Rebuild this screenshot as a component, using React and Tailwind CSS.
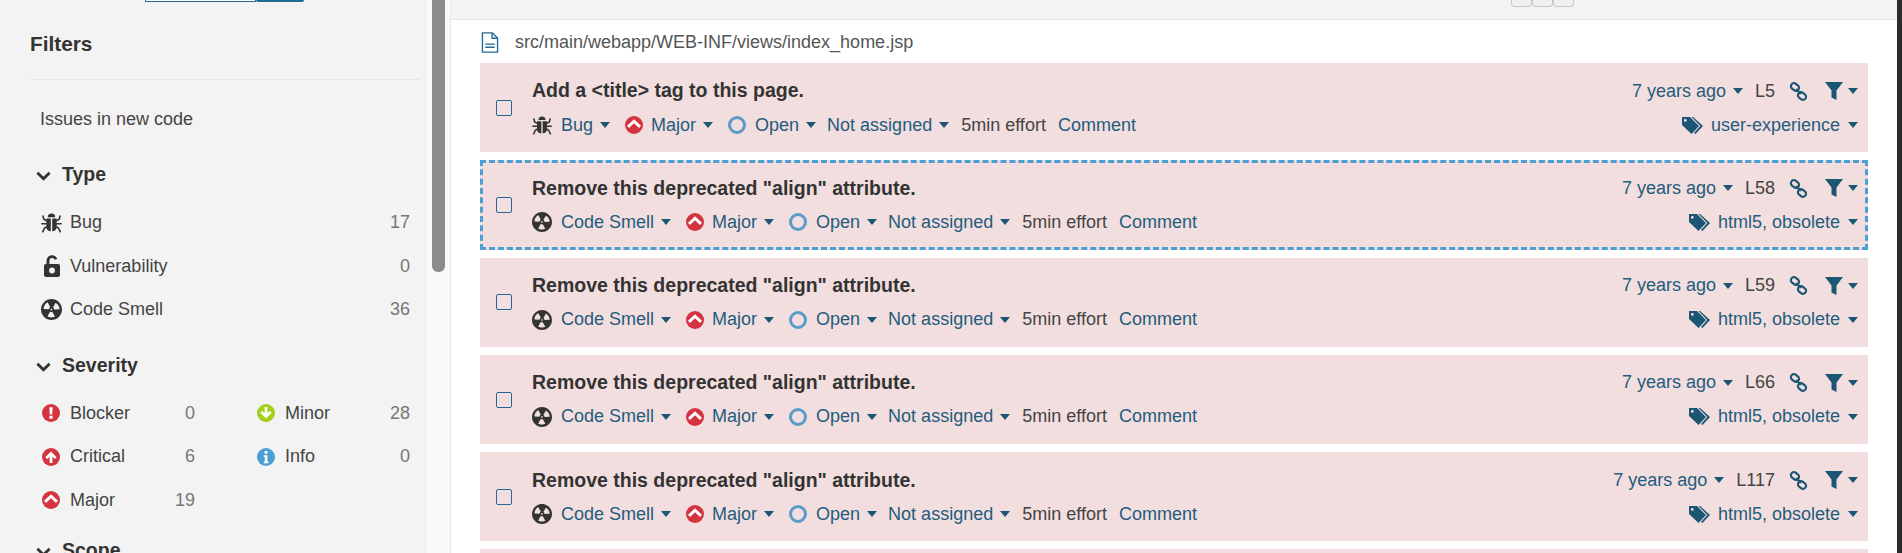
import React from "react";

const ISSUES = [
  { title: "Add a <title> tag to this page.", type: "Bug", line: "L5", tags: "user-experience" },
  { title: 'Remove this deprecated "align" attribute.', type: "Code Smell", line: "L58", tags: "html5, obsolete", focused: true },
  { title: 'Remove this deprecated "align" attribute.', type: "Code Smell", line: "L59", tags: "html5, obsolete" },
  { title: 'Remove this deprecated "align" attribute.', type: "Code Smell", line: "L66", tags: "html5, obsolete" },
  { title: 'Remove this deprecated "align" attribute.', type: "Code Smell", line: "L117", tags: "html5, obsolete" },
];

const BugIcon = ({ className }) => (
  <svg viewBox="0 0 21 21" className={className} fill="currentColor">
    <path d="M6.800 5.200a3.700 3.700 0 0 1 7.400 0z" />
    <path d="M5.300 6.500h4.500v12.800c-2.700 0-4.500-1.700-4.500-4.300zM15.700 6.500h-4.500v12.800c2.700 0 4.500-1.700 4.500-4.300z" />
    <path fill="none" stroke="currentColor" strokeWidth="1.600" d="M1.800 3.500l1 3.800 2.800 1.500M19.200 3.500l-1 3.800-2.800 1.500M.3 11.800h5.300M20.700 11.800h-5.300M1.500 20.300l2-4.300 2.300-1.300M19.500 20.300l-2-4.300-2.300-1.300" />
  </svg>
);

const LockIcon = ({ className }) => (
  <svg viewBox="0 0 16 22" className={className} fill="currentColor">
    <path fillRule="evenodd" d="M2.500 9V6C2.500 2.500 5 .2 8 .2c2.600 0 4.600 1.500 5.300 3.800l-2.800.8C10.100 3.500 9.200 2.900 8 2.900 6.500 2.900 5.400 4.100 5.400 6v3H14c1.100 0 2 .9 2 2v9c0 1.100-.9 2-2 2H2c-1.100 0-2-.9-2-2v-9c0-1.100.9-2 2-2h.5zM8 12.600a2.900 2.900 0 1 0 0 5.800 2.900 2.900 0 0 0 0-5.800z" />
  </svg>
);

const SmellIcon = ({ className }) => (
  <svg viewBox="2 2 12 12" className={className} fill="currentColor">
    <path fillRule="evenodd" d="M8 2C4.700 2 2 4.700 2 8s2.700 6 6 6 6-2.700 6-6-2.700-6-6-6zm-.5 5.500h.9v.9h-.9v-.9zm-3.800.2c-.1 0-.2-.1-.2-.2 0-.4.1-1.200.6-2S5.300 4.200 5.600 4c.2 0 .3 0 .3.1l1.300 2.300c0 .1 0 .2-.1.2-.1.2-.2.3-.3.5-.1.2-.2.4-.2.5 0 .1-.1.2-.2.2l-2.700-.1zM9.900 12c-.3.2-1.100.5-2 .5-.9 0-1.700-.3-2-.5-.1 0-.1-.2-.1-.3l1.300-2.300c0-.1.1-.1.2-.1.2.1.3.1.5.1s.4 0 .5-.1c.1 0 .2 0 .2.1l1.300 2.300c.2.2.2.3.1.3zm2.500-4.100L9.700 8c-.1 0-.2-.1-.2-.2 0-.2-.1-.4-.2-.5 0-.1-.2-.3-.3-.4-.1 0-.1-.1-.1-.2l1.300-2.300c.1-.1.2-.1.3-.1.3.2 1 .7 1.500 1.500s.6 1.600.6 2c0 0-.1.1-.2.1z" />
  </svg>
);

const SevIcon = ({ kind, className }) => {
  const fill = kind === "minor" ? "#a4d01a" : kind === "info" ? "#4b9fd5" : "#d4333f";
  return (
    <svg viewBox="0 0 18 18" className={className}>
      <circle cx="9" cy="9" r="9" fill={fill} />
      {kind === "blocker" && (
        <path fill="#fff" d="M7.300 3.200h3.400l-.5 7.300H7.800zM7.400 11.800h3.200v3H7.400z" />
      )}
      {kind === "critical" && (
        <path fill="#fff" d="M9 3.500l5.700 5.700-1.900 1.800-2.400-2.300V15H7.600V8.700L5.200 11 3.300 9.200z" />
      )}
      {kind === "major" && (
        <path fill="#fff" d="M9 3.300l7 6.500-2 2.100-5-4.600-5 4.600-2-2.100z" />
      )}
      {kind === "minor" && (
        <path fill="#fff" d="M9 14.500L3.300 8.800 5.200 7l2.400 2.300V3h2.800v6.300L12.800 7l1.900 1.800z" />
      )}
      {kind === "info" && (
        <path fill="#fff" d="M7.600 3h2.800v2.800H7.600zM6.800 7.300h3.600v6.200h1v1.700H6.800v-1.700h1V9H6.800z" />
      )}
    </svg>
  );
};

const Caret = () => (
  <svg viewBox="0 0 10 6" className="w-[10px] h-[6px] shrink-0 text-[#1b5674]" fill="currentColor">
    <path d="M0 0h10L5 6z" />
  </svg>
);

const Chevron = () => (
  <svg viewBox="0 0 16 10" className="w-[15px] h-[10px] text-[#333]" fill="none" stroke="currentColor" strokeWidth="3">
    <path d="M1.500 1.500L8 8l6.500-6.500" />
  </svg>
);

const FacetRow = ({ icon, label, count }) => (
  <div className="flex items-center h-[43.5px] pl-[11px] pr-[10px]">
    <span className="w-[29px] flex justify-start items-center">{icon}</span>
    <span className="flex-1 text-[#444]">{label}</span>
    <span className="text-[#777]">{count}</span>
  </div>
);

const FacetTitle = ({ children, className }) => (
  <div className={`flex items-center pl-[6px] font-bold text-[19.5px] text-[#333] ${className}`}>
    <span className="w-[26px] flex mt-[4px]">
      <Chevron />
    </span>
    {children}
  </div>
);

const SevRow = ({ kind, label, count }) => (
  <div className="flex items-center h-[43.5px] pl-[12px]">
    <span className="w-[28px] flex items-center">
      <SevIcon kind={kind} className="w-[18px] h-[18px]" />
    </span>
    <span className="flex-1 text-[#444]">{label}</span>
    <span className="text-[#777]">{count}</span>
  </div>
);

const Sidebar = () => (
  <aside className="w-[427px] shrink-0 bg-[#f3f3f3] pl-[30px] pr-[7px] overflow-hidden">
    <div className="flex h-[3px]">
      <div className="ml-[115px] w-[111px] h-[2px] border-x border-b border-[#236a97] bg-white" />
      <div className="w-[48px] h-[2px] rounded-b bg-[#236a97]" />
    </div>
    <h2 className="font-bold text-[20.8px] text-[#333] leading-[22px] mt-[30px]">Filters</h2>
    <div className="h-px bg-[#e6e6e6] mt-[24px]" />
    <p className="pl-[10px] mt-[29px] leading-[20px] text-[#444]">Issues in new code</p>
    <FacetTitle className="mt-[33px] leading-[24px]">Type</FacetTitle>
    <div className="mt-[15px]">
      <FacetRow icon={<BugIcon className="w-[21px] h-[21px] text-[#333]" />} label="Bug" count="17" />
      <FacetRow icon={<span className="pl-[3px] flex"><LockIcon className="w-[16px] h-[22px] text-[#333]" /></span>} label="Vulnerability" count="0" />
      <FacetRow icon={<SmellIcon className="w-[21px] h-[21px] text-[#333]" />} label="Code Smell" count="36" />
    </div>
    <FacetTitle className="mt-[21px] leading-[24px]">Severity</FacetTitle>
    <div className="mt-[15px] grid grid-cols-2 gap-x-[60px]">
      <div>
        <SevRow kind="blocker" label="Blocker" count="0" />
        <SevRow kind="critical" label="Critical" count="6" />
        <SevRow kind="major" label="Major" count="19" />
      </div>
      <div className="-ml-[10px] mr-[10px]">
        <SevRow kind="minor" label="Minor" count="28" />
        <SevRow kind="info" label="Info" count="0" />
      </div>
    </div>
    <FacetTitle className="mt-[16px] leading-[24px]">Scope</FacetTitle>
  </aside>
);

const LinkIcon = () => (
  <svg viewBox="0 0 20 20" className="w-[19px] h-[19px] text-[#1b5674]" fill="none" stroke="currentColor" strokeWidth="2.300">
    <rect x="1.800" y="2" width="9" height="6.500" rx="3.200" transform="rotate(38 6.300 5.200)" />
    <rect x="9.200" y="11.500" width="9" height="6.500" rx="3.200" transform="rotate(38 13.700 14.700)" />
    <path d="M7.500 7.500l5 5" />
  </svg>
);

const FilterIcon = () => (
  <svg viewBox="0 0 18 18" className="w-[18px] h-[18px] text-[#1b5674]" fill="currentColor">
    <path d="M0 0h18l-6.500 8.500V18l-5-2.500V8.500z" />
  </svg>
);

const TagIcon = () => (
  <svg viewBox="0 0 21 17" className="w-[21px] h-[17px] text-[#1b5674]" fill="currentColor">
    <path fillRule="evenodd" d="M0 0h8l9 9-7.500 8L0 8zM3.300 2a1.400 1.400 0 1 0 0 2.800 1.400 1.400 0 0 0 0-2.800z" />
    <path d="M11 0l10 9-7.500 8-1.500-1 6.300-7-8.800-9z" />
  </svg>
);

const Link = ({ children }) => (
  <span className="inline-flex items-center gap-[7px] text-[#1f5c7d]">
    {children}
    <Caret />
  </span>
);

const IssueRow = ({ issue }) => (
  <div
    className={`relative flex h-[89.3px] shrink-0 bg-[#f2dede] ${
      issue.focused ? "border-[3px] border-dashed border-[#4b9fd5]" : ""
    }`}
  >
    <div className={`flex items-center ${issue.focused ? "pl-[13px] w-[49px]" : "pl-[16px] w-[52px]"}`}>
      <span className="block w-[16px] h-[16px] rounded-[2px] border border-[#236a97]" />
    </div>
    <div className={`flex-1 flex flex-col ${issue.focused ? "pr-[7px] pt-[13px]" : "pr-[10px] pt-[16px]"}`}>
      <div className="flex justify-between items-center h-[24px]">
        <span className="font-bold text-[19.5px] text-[#333]">{issue.title}</span>
        <div className="flex items-center">
          <Link>7 years ago</Link>
          <span className="ml-[12px] text-[#444]">{issue.line}</span>
          <span className="ml-[14px] flex"><LinkIcon /></span>
          <span className="ml-[17px] flex items-center gap-[5px]">
            <FilterIcon />
            <Caret />
          </span>
        </div>
      </div>
      <div className="flex justify-between items-center h-[24px] mt-[10px]">
        <div className="flex items-center">
          {issue.type === "Bug" ? (
            <BugIcon className="w-[20px] h-[20px] text-[#333]" />
          ) : (
            <SmellIcon className="w-[20px] h-[20px] text-[#333]" />
          )}
          <span className="ml-[9px]"><Link>{issue.type}</Link></span>
          <span className="ml-[15px]"><SevIcon kind="major" className="w-[18px] h-[18px]" /></span>
          <span className="ml-[8px]"><Link>Major</Link></span>
          <span className="ml-[15px] block w-[18px] h-[18px] rounded-full border-[3px] border-[#5b9bc9]" />
          <span className="ml-[9px]"><Link>Open</Link></span>
          <span className="ml-[11px]"><Link>Not assigned</Link></span>
          <span className="ml-[12px] text-[#444]">5min effort</span>
          <span className="ml-[12px] text-[#1f5c7d]">Comment</span>
        </div>
        <div className="flex items-center gap-[8px]">
          <TagIcon />
          <span className="inline-flex items-center gap-[8px] text-[#1f5c7d]">
            {issue.tags}
            <Caret />
          </span>
        </div>
      </div>
    </div>
  </div>
);

const FileIcon = () => (
  <svg viewBox="0 0 16 20" className="w-[18px] h-[21px] text-[#236a97]" fill="none" stroke="currentColor" strokeWidth="1.300">
    <path d="M.8.800h9.500l4.900 4.900v13.500H.800z" />
    <path d="M10 1v5h5M3.500 11.500h9M3.500 14.500h9" />
  </svg>
);

export default function App() {
  return (
    <div className="flex w-[1902px] h-[553px] overflow-hidden bg-white text-[18px] font-['Liberation_Sans',Arial,sans-serif]">
      <Sidebar />
      <div className="w-[23px] shrink-0 bg-[#fafafa] pl-[5px]">
        <div className="w-[13px] h-[272px] rounded-b-[6px] bg-[#8c8c8c]" />
      </div>
      <main className="flex-1 min-w-0 border-l border-[#e6e6e6] flex flex-col">
        <div className="h-[20px] shrink-0 bg-[#f3f3f3] border-b border-[#e6e6e6] flex pl-[1060px]">
          {[0, 1, 2].map((k) => (
            <span key={k} className="w-[21px] h-[7px] rounded-b-[4px] border border-t-0 border-[#c8c8c8] bg-[#f0f0f0]" />
          ))}
        </div>
        <div className="flex items-center h-[43px] shrink-0 pl-[30px] pt-[2px] text-[#555]">
          <FileIcon />
          <span className="ml-[16px]">src/main/webapp/WEB-INF/views/index_home.jsp</span>
        </div>
        <div className="flex flex-col gap-[8px] pl-[29px] pr-[29px]">
          {ISSUES.map((issue, i) => (
            <IssueRow key={i} issue={issue} />
          ))}
          <div className="h-[20px] shrink-0 bg-[#f2dede]" />
        </div>
      </main>
      <div className="w-[5px] shrink-0 bg-[#2b2b2b]" />
    </div>
  );
}
